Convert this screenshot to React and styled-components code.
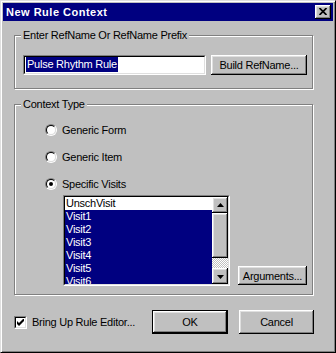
import React from "react";
import styled, { createGlobalStyle, css } from "styled-components";

const GlobalStyle = createGlobalStyle`
  body {
    margin: 0;
    background: #c0c0c0;
    font-family: "Liberation Sans", Arial, sans-serif;
  }
`;

const raised = css`
  background: #c0c0c0;
  box-shadow: inset -1px -1px 0 #000, inset 1px 1px 0 #fff,
    inset -2px -2px 0 #808080, inset 2px 2px 0 #dfdfdf;
`;

const Window = styled.div`
  width: 336px;
  height: 353px;
  box-sizing: border-box;
  padding: 2px;
  background: #c0c0c0;
  border: 1px solid;
  border-color: #dfdfdf #000 #000 #dfdfdf;
  box-shadow: inset 1px 1px 0 #fff, inset -1px -1px 0 #808080;
  font-size: 11px;
  letter-spacing: -0.25px;
  color: #000;
`;

const TitleBar = styled.div`
  height: 18px;
  display: flex;
  align-items: center;
  padding: 0 2px 0 3px;
  background: #000080;
  color: #fff;
  font-weight: bold;
  letter-spacing: 0.5px;
`;

const CloseButton = styled.button`
  ${raised};
  margin-left: auto;
  width: 16px;
  height: 14px;
  padding: 0 0 1px 0;
  border: none;
  display: flex;
  align-items: center;
  justify-content: center;
`;

const Body = styled.div`
  padding: 14px 0 0 11px;
`;

const Group = styled.div`
  position: relative;
  box-sizing: border-box;
  width: 299px;
  height: ${(p) => p.$height}px;
  margin-top: ${(p) => p.$top || 0}px;
  border: 1px solid #808080;
  box-shadow: 1px 1px 0 #fff, inset 1px 1px 0 #fff;
`;

const Legend = styled.span`
  position: absolute;
  top: -7px;
  left: 6px;
  padding: 0 2px;
  line-height: 13px;
  background: #c0c0c0;
`;

const NameRow = styled.div`
  display: flex;
  gap: 5px;
  padding: 19px 0 0 8px;
`;

const FieldOuter = styled.div`
  box-sizing: border-box;
  width: ${(p) => p.$width}px;
  height: ${(p) => p.$height}px;
  border: 1px solid;
  border-color: #808080 #fff #fff #808080;
`;

const FieldInner = styled.div`
  box-sizing: border-box;
  height: 100%;
  display: flex;
  border: 1px solid;
  border-color: #000 #dfdfdf #dfdfdf #000;
  background: #fff;
  overflow: hidden;
`;

const Selection = styled.span`
  display: inline-block;
  margin: 0 0 0 1px;
  padding: 0 1px 0 1px;
  height: 15px;
  line-height: 15px;
  background: #000080;
  color: #fff;
`;

const Button = styled.button`
  ${raised};
  box-sizing: border-box;
  width: ${(p) => p.$width}px;
  height: ${(p) => p.$height}px;
  padding: 0;
  border: ${(p) => (p.$default ? "1px solid #000" : "none")};
  font: inherit;
  letter-spacing: inherit;
  color: #000;
  flex-shrink: 0;
`;

const SideButton = styled(Button)`
  margin: 0 0 1px 8px;
`;

const Choices = styled.div`
  display: flex;
  flex-direction: column;
  gap: 14px;
  padding: 18px 0 0 30px;
`;

const RadioRow = styled.label`
  display: flex;
  align-items: center;
  gap: 5px;
  height: 13px;
`;

const RadioMark = styled.span`
  position: relative;
  box-sizing: border-box;
  width: 12px;
  height: 12px;
  border-radius: 50%;
  border: 1px solid;
  border-color: #808080 #fff #fff #808080;
  &::before {
    content: "";
    position: absolute;
    inset: 0;
    border-radius: 50%;
    border: 1px solid;
    border-color: #000 #dfdfdf #dfdfdf #000;
    background: #fff;
  }
  &::after {
    content: "";
    display: ${(p) => (p.$checked ? "block" : "none")};
    position: absolute;
    left: 3px;
    top: 3px;
    width: 4px;
    height: 4px;
    border-radius: 50%;
    background: #000;
  }
`;

const ListRow = styled.div`
  display: flex;
  align-items: flex-end;
  margin: 5px 0 0 48px;
`;

const Items = styled.div`
  flex: 1;
  overflow: hidden;
`;

const Item = styled.div`
  height: 13px;
  line-height: 13px;
  padding-left: 1px;
  background: ${(p) => (p.$selected ? "#000080" : "#fff")};
  color: ${(p) => (p.$selected ? "#fff" : "#000")};
  white-space: nowrap;
`;

const ScrollBar = styled.div`
  width: 16px;
  display: flex;
  flex-direction: column;
`;

const ScrollButton = styled.div`
  ${raised};
  height: 16px;
  display: flex;
  align-items: center;
  justify-content: center;
`;

const Thumb = styled.div`
  ${raised};
  height: 45px;
`;

const Track = styled.div`
  flex: 1;
  background: repeating-conic-gradient(#c0c0c0 0 25%, #fff 0 50%) 0 0 / 2px 2px;
`;

const Footer = styled.div`
  display: flex;
  align-items: center;
  width: 300px;
  margin-top: 15px;
  gap: 11px;
`;

const CheckLabel = styled.label`
  flex: 1;
  display: flex;
  align-items: center;
  gap: 5px;
`;

const CheckBox = styled.span`
  box-sizing: border-box;
  width: 13px;
  height: 13px;
  border: 1px solid;
  border-color: #808080 #fff #fff #808080;
  & > span {
    box-sizing: border-box;
    display: flex;
    align-items: center;
    justify-content: center;
    height: 100%;
    border: 1px solid;
    border-color: #000 #dfdfdf #dfdfdf #000;
    background: #fff;
  }
`;

const Arrow = ({ down }) => (
  <svg width="7" height="4" viewBox="0 0 7 4" style={{ marginTop: down ? 1 : -1 }}>
    <polygon
      points={down ? "0,0 7,0 3.5,4" : "0,4 7,4 3.5,0"}
      fill="#000"
    />
  </svg>
);

const visits = ["Visit1", "Visit2", "Visit3", "Visit4", "Visit5", "Visit6"];

export default function App() {
  return (
    <>
      <GlobalStyle />
      <Window>
        <TitleBar>
          New Rule Context
          <CloseButton aria-label="Close">
            <svg width="8" height="7" viewBox="0 0 8 7">
              <path d="M0.5 0 L7.5 7 M7.5 0 L0.5 7" stroke="#000" strokeWidth="1.7" />
            </svg>
          </CloseButton>
        </TitleBar>
        <Body>
          <Group $height={54}>
            <Legend>Enter RefName Or RefName Prefix</Legend>
            <NameRow>
              <FieldOuter $width={183} $height={20}>
                <FieldInner>
                  <Selection>Pulse Rhythm Rule</Selection>
                </FieldInner>
              </FieldOuter>
              <Button $width={96} $height={20}>
                Build RefName...
              </Button>
            </NameRow>
          </Group>

          <Group $height={191} $top={15}>
            <Legend>Context Type</Legend>
            <Choices>
              <RadioRow>
                <RadioMark />
                Generic Form
              </RadioRow>
              <RadioRow>
                <RadioMark />
                Generic Item
              </RadioRow>
              <RadioRow>
                <RadioMark $checked />
                Specific Visits
              </RadioRow>
            </Choices>
            <ListRow>
              <FieldOuter $width={167} $height={91}>
                <FieldInner>
                  <Items>
                    <Item>UnschVisit</Item>
                    {visits.map((v) => (
                      <Item key={v} $selected>
                        {v}
                      </Item>
                    ))}
                  </Items>
                  <ScrollBar>
                    <ScrollButton>
                      <Arrow />
                    </ScrollButton>
                    <Thumb />
                    <Track />
                    <ScrollButton>
                      <Arrow down />
                    </ScrollButton>
                  </ScrollBar>
                </FieldInner>
              </FieldOuter>
              <SideButton $width={69} $height={19}>
                Arguments...
              </SideButton>
            </ListRow>
          </Group>

          <Footer>
            <CheckLabel>
              <CheckBox>
                <span>
                  <svg width="7" height="7" viewBox="0 0 7 7">
                    <path d="M0 2 L2 4 L7 -1 L7 2 L2 7 L0 5 Z" fill="#000" />
                  </svg>
                </span>
              </CheckBox>
              Bring Up Rule Editor...
            </CheckLabel>
            <Button $width={76} $height={24} $default>
              OK
            </Button>
            <Button $width={75} $height={24}>
              Cancel
            </Button>
          </Footer>
        </Body>
      </Window>
    </>
  );
}
